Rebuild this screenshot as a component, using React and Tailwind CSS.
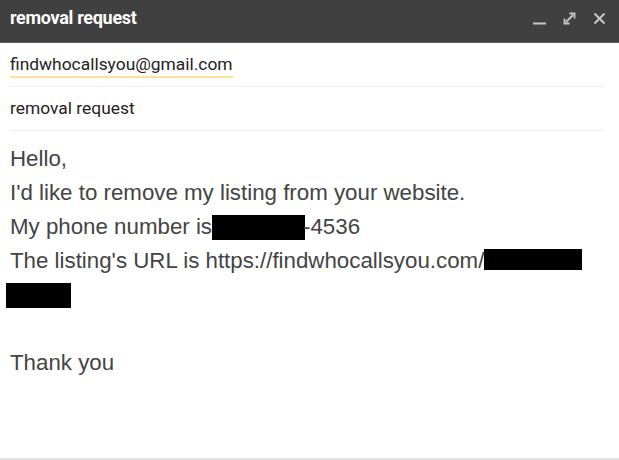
import React from "react"

const Header = () => {
    return (
        <div className="h-[43px] bg-[#404040] flex items-center justify-between pl-[10px] pr-[13px] border-b border-[#5a5a5a]">
            <div className="text-white font-bold text-[18px] tracking-[-0.3px] -mt-[8px]">removal request</div>
            <div className="flex items-center gap-[17px] -mt-[5px]">
                <svg width="13" height="13" viewBox="0 0 13 13">
                    <rect x="0" y="10.5" width="13" height="2" fill="#c8c8c8" />
                </svg>
                <svg width="13" height="13" viewBox="0 0 13 13" fill="none" stroke="#c8c8c8" strokeWidth="1.8">
                    <path d="M3 10 L10 3" />
                    <path d="M6.5 1.5 H11.5 V6.5" />
                    <path d="M1.5 6.5 V11.5 H6.5" />
                </svg>
                <svg width="13" height="13" viewBox="0 0 13 13" fill="none" stroke="#c8c8c8" strokeWidth="2">
                    <path d="M1.5 1.5 L11.5 11.5 M11.5 1.5 L1.5 11.5" />
                </svg>
            </div>
        </div>
    )
}

export default function App() {
    return (
        <div className="w-[619px] h-[460px] bg-white flex flex-col font-['Roboto',sans-serif] overflow-hidden">
            <Header />
            <div className="mx-[10px] mr-[15px] h-[44px] border-b border-[#efefef] flex items-center">
                <span className="text-[17.4px] text-[#222] leading-[20px] pb-[2px] border-b-2 border-[#fde293] mt-[3px]">findwhocallsyou@gmail.com</span>
            </div>
            <div className="mx-[10px] mr-[15px] h-[44px] border-b border-[#efefef] flex items-center">
                <span className="text-[17.4px] text-[#222]">removal request</span>
            </div>
            <div className="flex-1 px-[10px] pt-[11px] font-['Liberation_Sans',Arial,sans-serif] text-[22.3px] leading-[34px] text-[#444] border-b-2 border-[#e4e4e4]">
                <div>Hello,</div>
                <div>I'd like to remove my listing from your website.</div>
                <div className="flex items-center">
                    <span>My phone number is</span>
                    <span className="inline-block bg-black w-[93px] h-[25px] mt-[1px]"></span>
                    <span className="-ml-[2px]">-4536</span>
                </div>
                <div className="flex items-center">
                    <span>The listing's URL is https://findwhocallsyou.com/</span>
                    <span className="inline-block bg-black w-[98px] h-[21px] -mt-[3px]"></span>
                </div>
                <div className="h-[34px] flex items-center -ml-[4px]">
                    <span className="inline-block bg-black w-[65px] h-[25px]"></span>
                </div>
                <div>&nbsp;</div>
                <div>Thank you</div>
            </div>
        </div>
    )
}
